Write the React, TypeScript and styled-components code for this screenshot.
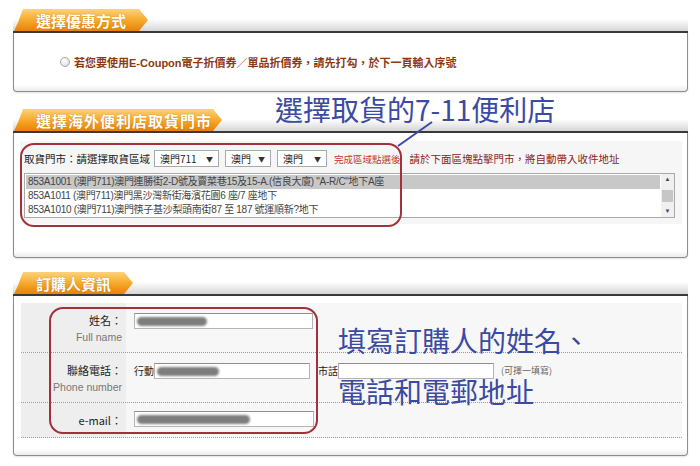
import styled, { createGlobalStyle } from 'styled-components';

const GlobalStyle = createGlobalStyle`
  html, body {
    margin: 0;
    padding: 0;
    background: #ffffff;
  }
  body {
    font-family: 'Liberation Sans', 'Noto Sans CJK TC', sans-serif;
    color: #333333;
  }
`;

const ANNOT_BLUE = '#3b4aa3';
const ANNOT_RED = '#a3303a';

const stores = [
  '853A1001 (澳門711)澳門連勝街2-D號及賣菜巷15及15-A.(信良大廈) "A-R/C"地下A座',
  '853A1011 (澳門711)澳門黑沙灣新街海濱花園6 座/7 座地下',
  '853A1010 (澳門711)澳門筷子基沙梨頭南街87 至 187 號運順新?地下',
];

const App = () => {
  return (
    <Page>
      <GlobalStyle />

      <Section gap={17}>
        <Header>
          <Tab w={134}>選擇優惠方式</Tab>
        </Header>
        <Box h={59}>
          <CouponRow>
            <Radio />
            <CouponText>
              若您要使用<Latin>E-Coupon</Latin>電子折價券／單品折價券，請先打勾，於下一頁輸入序號
            </CouponText>
          </CouponRow>
        </Box>
      </Section>

      <Section gap={14}>
        <Header>
          <Tab w={208} spacing={1}>
            選擇海外便利店取貨門市
          </Tab>
        </Header>
        <Box h={125} pad="8px 5px 0 6px">
          <StorePanel>
            <AreaRow>
              <AreaLabel>取貨門市：請選擇取貨區域</AreaLabel>
              <FakeSelect w={65}>
                <span>澳門711</span>
                <Caret>▼</Caret>
              </FakeSelect>
              <FakeSelect w={46}>
                <span>澳門</span>
                <Caret>▼</Caret>
              </FakeSelect>
              <FakeSelect w={50}>
                <span>澳門</span>
                <Caret>▼</Caret>
              </FakeSelect>
              <Hint tone="#c23a2a" size={9.5}>
                完成區域點選後
              </Hint>
              <Hint tone="#8c1c1c" size={10.5}>
                請於下面區塊點擊門市，將自動帶入收件地址
              </Hint>
            </AreaRow>
            <ListBox>
              <ListRows>
                {stores.map((s, i) => (
                  <ListRow key={s} selected={i === 0}>
                    {s}
                  </ListRow>
                ))}
              </ListRows>
              <ScrollBar>
                <ScrollArrow>▲</ScrollArrow>
                <ScrollThumb />
                <ScrollArrow>▼</ScrollArrow>
              </ScrollBar>
            </ListBox>
          </StorePanel>
        </Box>
      </Section>

      <Section gap={0}>
        <Header>
          <Tab w={119}>訂購人資訊</Tab>
        </Header>
        <Box h={160} pad="7px 5px 0 7px">
          <FormPanel>
            <FormRow h={49}>
              <LabelCell>
                <LabelMain>姓名：</LabelMain>
                <LabelSub>Full name</LabelSub>
              </LabelCell>
              <FieldCell pad={10}>
                <Field w={179}>
                  <Blur w={70} />
                </Field>
              </FieldCell>
            </FormRow>
            <FormRow h={49}>
              <LabelCell>
                <LabelMain>聯絡電話：</LabelMain>
                <LabelSub>Phone number</LabelSub>
              </LabelCell>
              <FieldCell pad={10}>
                <FieldTag>行動</FieldTag>
                <Field w={156}>
                  <Blur w={62} />
                </Field>
                <FieldTag lead={8}>市話</FieldTag>
                <Field w={156} />
                <Note>(可擇一填寫)</Note>
              </FieldCell>
            </FormRow>
            <FormRow h={34}>
              <LabelCell>
                <LabelMain>e-mail：</LabelMain>
              </LabelCell>
              <FieldCell pad={8}>
                <Field w={180}>
                  <Blur w={113} />
                </Field>
              </FieldCell>
            </FormRow>
          </FormPanel>
        </Box>
      </Section>

      {/* hand-drawn notes over the form */}
      <Callout x={20} y={143} w={382} h={84} />
      <Callout x={49} y={307} w={269} h={127} />
      <Pointer width="40" height="30" viewBox="0 0 40 30">
        <line x1="2" y1="26" x2="36" y2="2" stroke={ANNOT_BLUE} strokeWidth="2" />
      </Pointer>
      <Note1>選擇取貨的7-11便利店</Note1>
      <Note2>
        <NoteLine>填寫訂購人的姓名、</NoteLine>
        <NoteLine>電話和電郵地址</NoteLine>
      </Note2>
    </Page>
  );
};

export default App;

const Page = styled.div`
  position: relative;
  width: 700px;
  height: 466px;
  box-sizing: border-box;
  padding: 9px 12px 0 13px;
  overflow: hidden;
`;

const Section = styled.section<{ gap: number }>`
  margin-bottom: ${(p) => p.gap}px;
`;

const Header = styled.div`
  display: flex;
  align-items: flex-end;
  height: 24px;
  box-sizing: border-box;
  border-bottom: 2px solid #3a3a3a;
  border-top-right-radius: 4px;
  background: linear-gradient(to bottom, #ffffff, #d6d6d6) no-repeat bottom / 100% 12px;
`;

const Tab = styled.div<{ w: number; spacing?: number }>`
  width: ${(p) => p.w}px;
  height: 22px;
  margin-left: 1px;
  box-sizing: border-box;
  padding-left: 22px;
  display: flex;
  align-items: center;
  color: #ffffff;
  font-family: 'Noto Sans CJK TC', sans-serif;
  font-weight: 700;
  font-size: 15px;
  letter-spacing: ${(p) => p.spacing ?? 0}px;
  text-shadow: 0 0 1px rgba(150, 70, 0, 0.6);
  background: linear-gradient(to bottom, #fcd27c 0%, #f8b33a 40%, #f09516 75%, #e9820c 100%);
  clip-path: polygon(9px 0, calc(100% - 9px) 0, 100% 50%, calc(100% - 9px) 100%, 0 100%, 4px 60%);
`;

const Box = styled.div<{ h: number; pad?: string }>`
  height: ${(p) => p.h}px;
  box-sizing: border-box;
  padding: ${(p) => p.pad ?? '0'};
  border: 1px solid #8c8c8c;
  border-top: none;
  border-radius: 0 0 4px 4px;
  background: linear-gradient(to bottom, #ffffff calc(100% - 6px), #ebebeb);
  box-shadow: 0 1px 2px rgba(0, 0, 0, 0.12);
`;

const CouponRow = styled.div`
  display: flex;
  align-items: center;
  height: 100%;
  padding-left: 46px;
`;

const Radio = styled.span`
  width: 8px;
  height: 8px;
  margin-right: 4px;
  border: 1px solid #a8a8a8;
  border-radius: 50%;
  background: radial-gradient(circle at 40% 35%, #ffffff, #d8d8d8);
`;

const CouponText = styled.span`
  color: #8b3a14;
  font-family: 'Noto Sans CJK TC', sans-serif;
  font-weight: 700;
  font-size: 11px;
`;

const Latin = styled.span`
  font-family: 'Liberation Sans', sans-serif;
  font-weight: 700;
`;

const StorePanel = styled.div`
  padding: 9px 7px 6px 4px;
  background: #f6f6f6;
`;

const AreaRow = styled.div`
  display: flex;
  align-items: center;
  height: 17px;
  font-family: 'Noto Sans CJK TC', sans-serif;
`;

const AreaLabel = styled.span`
  font-size: 10.5px;
  color: #222222;
  margin-right: 4px;
`;

const FakeSelect = styled.div<{ w: number }>`
  display: flex;
  align-items: center;
  justify-content: space-between;
  width: ${(p) => p.w}px;
  height: 17px;
  box-sizing: border-box;
  margin-right: 6px;
  padding: 0 5px 0 5px;
  border: 1px solid #a9a9a9;
  background: #ffffff;
  font-size: 10px;
  color: #222222;
`;

const Caret = styled.span`
  font-size: 7px;
  color: #333333;
`;

const Hint = styled.span<{ tone: string; size: number }>`
  color: ${(p) => p.tone};
  font-size: ${(p) => p.size}px;
  margin-left: 1px;
  margin-right: 8px;
`;

const ListBox = styled.div`
  display: flex;
  margin-top: 6px;
  height: 45px;
  box-sizing: border-box;
  border: 1px solid #a9a9a9;
  background: #ffffff;
`;

const ListRows = styled.div`
  flex: 1;
  padding: 1px 1px 0 1px;
`;

const ListRow = styled.div<{ selected?: boolean }>`
  height: 14px;
  line-height: 14px;
  padding-left: 2px;
  font-size: 10px;
  letter-spacing: -0.3px;
  color: #444444;
  white-space: nowrap;
  background: ${(p) => (p.selected ? '#c8c8c8' : 'transparent')};
`;

const ScrollBar = styled.div`
  display: flex;
  flex-direction: column;
  justify-content: space-between;
  align-items: center;
  width: 13px;
  background: #f0f0f0;
`;

const ScrollArrow = styled.span`
  font-size: 6px;
  line-height: 11px;
  color: #444444;
`;

const ScrollThumb = styled.span`
  width: 11px;
  height: 12px;
  background: #c6c6c6;
`;

const FormPanel = styled.div`
  background: #f7f7f7;
`;

const FormRow = styled.div<{ h: number }>`
  display: flex;
  height: ${(p) => p.h}px;
  border-bottom: 1px dotted #9a9a9a;
`;

const LabelCell = styled.div`
  width: 105px;
  box-sizing: border-box;
  display: flex;
  flex-direction: column;
  align-items: flex-end;
  padding: 9px 4px 0 0;
  background: #eeeeee;
`;

const LabelMain = styled.span`
  font-family: 'Noto Sans CJK TC', sans-serif;
  font-size: 11px;
  line-height: 16px;
  color: #222222;
`;

const LabelSub = styled.span`
  font-family: 'Liberation Sans', sans-serif;
  font-size: 10.5px;
  line-height: 18px;
  color: #777777;
`;

const FieldCell = styled.div<{ pad: number }>`
  flex: 1;
  display: flex;
  align-items: flex-start;
  padding: ${(p) => p.pad}px 0 0 8px;
`;

const FieldTag = styled.span<{ lead?: number }>`
  margin-left: ${(p) => p.lead ?? 0}px;
  font-family: 'Noto Sans CJK TC', sans-serif;
  font-size: 10px;
  line-height: 16px;
  color: #222222;
`;

const Field = styled.div<{ w: number }>`
  display: flex;
  align-items: center;
  width: ${(p) => p.w}px;
  height: 16px;
  box-sizing: border-box;
  padding-left: 2px;
  border: 1px solid #b4b4b4;
  border-top-color: #8e8e8e;
  background: #ffffff;
`;

const Blur = styled.span<{ w: number }>`
  width: ${(p) => p.w}px;
  height: 9px;
  border-radius: 5px;
  background: #7d7d7d;
  filter: blur(1.2px);
`;

const Note = styled.span`
  margin-left: 7px;
  margin-top: 2px;
  font-family: 'Noto Sans CJK TC', sans-serif;
  font-size: 9px;
  line-height: 11px;
  color: #666666;
`;

const Callout = styled.div<{ x: number; y: number; w: number; h: number }>`
  position: absolute;
  left: ${(p) => p.x}px;
  top: ${(p) => p.y}px;
  width: ${(p) => p.w}px;
  height: ${(p) => p.h}px;
  box-sizing: border-box;
  border: 2px solid ${ANNOT_RED};
  border-radius: 14px;
  pointer-events: none;
`;

const Pointer = styled.svg`
  position: absolute;
  left: 396px;
  top: 120px;
`;

const NoteText = styled.div`
  position: absolute;
  font-family: 'Noto Sans CJK TC', sans-serif;
  font-size: 28px;
  line-height: 1;
  color: ${ANNOT_BLUE};
  white-space: nowrap;
`;

const Note1 = styled(NoteText)`
  left: 275px;
  top: 95px;
`;

const Note2 = styled(NoteText)`
  left: 338px;
  top: 326px;
  display: flex;
  flex-direction: column;
  gap: 23px;
`;

const NoteLine = styled.div`
  height: 28px;
`;
